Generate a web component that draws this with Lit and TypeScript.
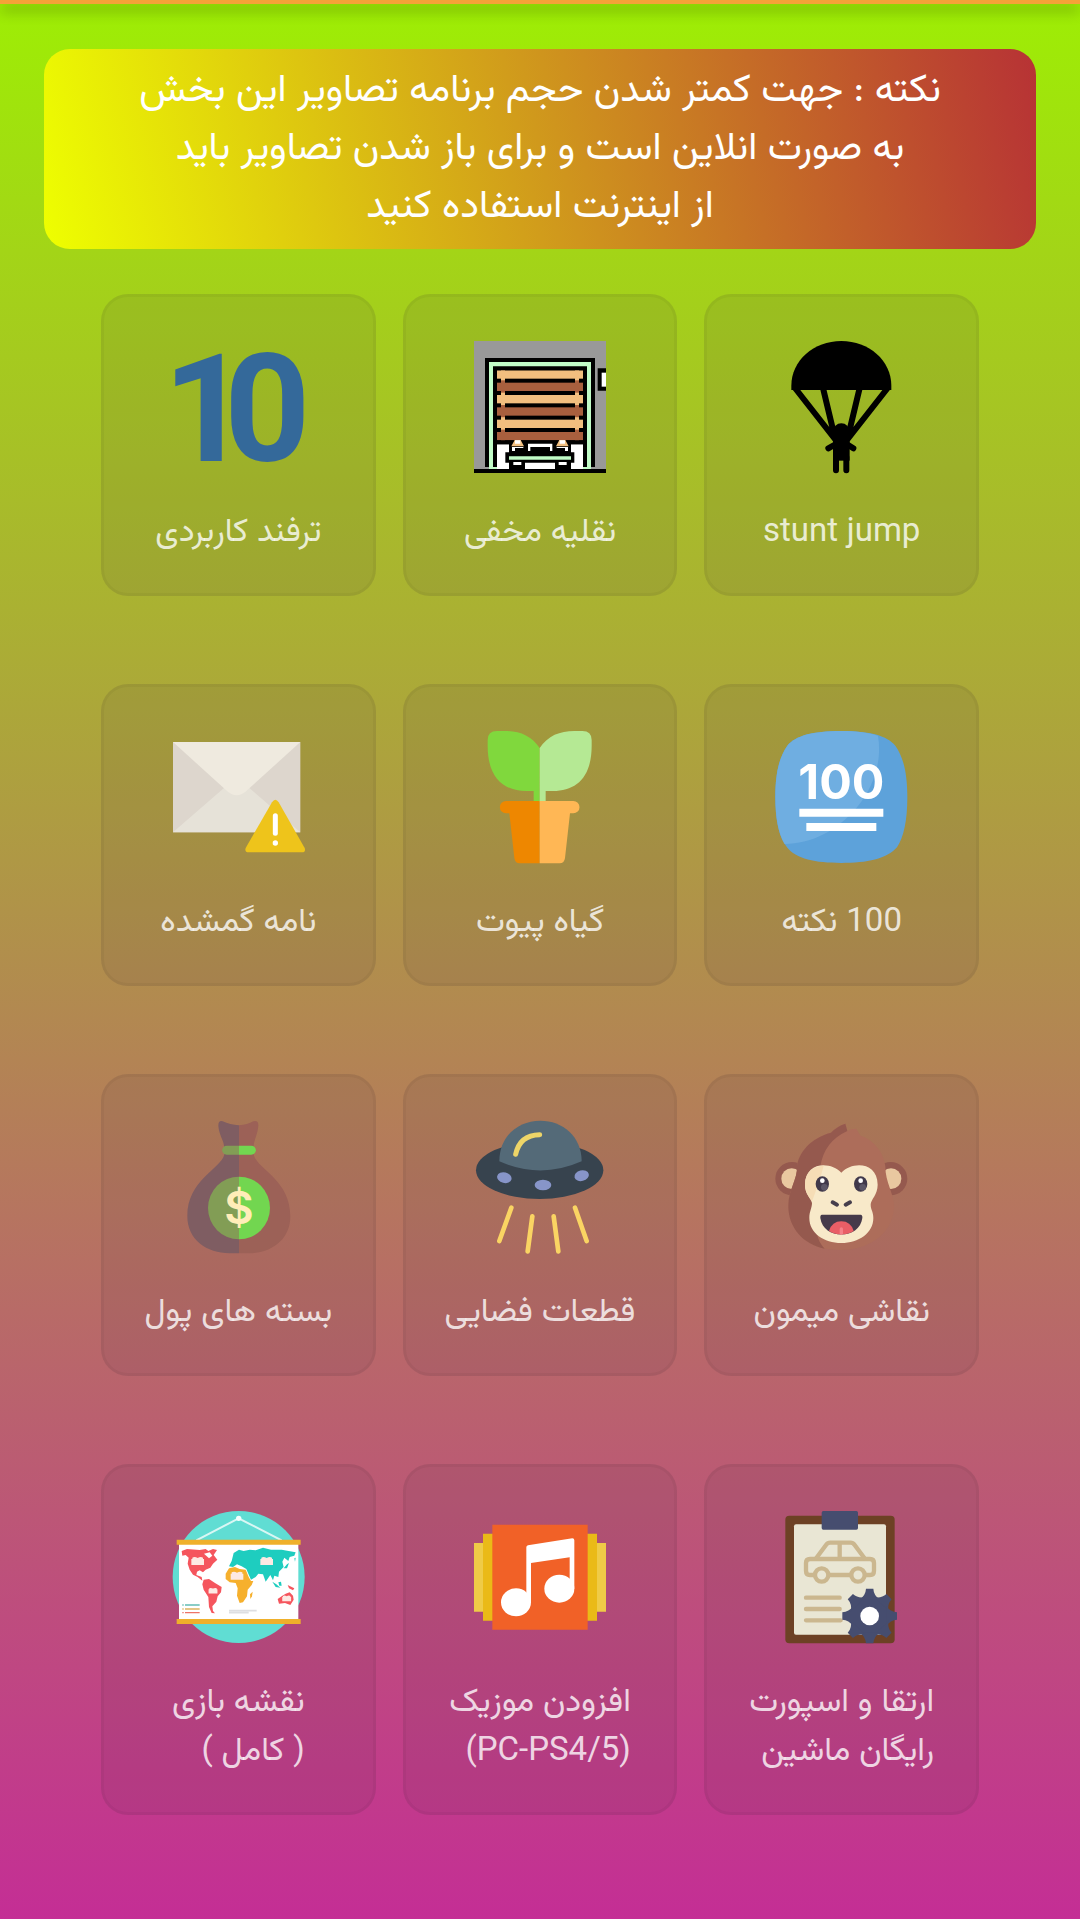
import { LitElement, html, svg, css, TemplateResult, SVGTemplateResult } from "lit";
import { customElement, property } from "lit/decorators.js";

const parachute = svg`
  <path d="M303 328V315C303 240 370 181 453 181S603 240 603 315V328Z"/>
  <path d="M314 322L436 478M398 322L431 460M508 322L475 460M592 322L470 478" stroke="#000" stroke-width="18"/>
  <circle cx="453" cy="453" r="25"/>
  <path d="M428 455H478V540H428Z"/>
  <path d="M414 503L442 487M489 503L464 487M437 530V569M468 530V569" stroke="#000" stroke-width="18" stroke-linecap="round"/>`;

const slat = (y: number, fill: string) => svg`
  <rect x="321" y=${y} width="258" height="25" fill=${fill}/>
  <rect x="333" y=${y - 7} width="12" height="38" fill=${fill}/>
  <rect x="555" y=${y - 7} width="12" height="38" fill=${fill}/>`;

const garage = svg`
  <path d="M252 182H648V566H252Z" fill="#999"/>
  <path d="M252 566H648V578H252ZM623 264H648V331H623Z"/>
  <path d="M635 277H648V319H635Z" fill="#fff"/>
  <path d="M285 233H615V560H285Z"/>
  <path d="M297 245H603V566H297Z" fill="#c1fcc7"/>
  <path d="M309 258H591V560H309Z"/>
  <path d="M321 480H579V566H321Z" fill="#fff"/>
  <path d="M321 270H579V492H321Z"/>
  <path d="M333 270H345V470H333ZM555 270H567V470H555Z" fill="#f2bf7f"/>
  ${[270, 307, 344, 381, 418, 455].map((y, i) => slat(y, i % 2 ? "#a85f3e" : "#f2bf7f"))}
  <path d="M321 262H579V270H321ZM321 480H579V492H321Z"/>
  <path d="M357 486H543V516H553V547H543V566H495V547H405V566H357V547H346V516H357Z"/>
  <path d="M364 498L374 479H392L402 498ZM498 498L508 479H526L536 498Z" fill="#f2bf7f"/>
  <path d="M375 490V480H391V490ZM509 490V480H525V490ZM366 500H400V512H366ZM414 490H487V512H414ZM500 500H534V512H500ZM370 545H394V554H370ZM506 545H530V554H506Z" fill="#fff"/>
  <path d="M421 500H480V512H421ZM375 503H410V515H375ZM492 503H525V515H492Z"/>
  <path d="M357 528H543V538H357Z" fill="#c1fcc7"/>`;

const ten = svg`
  <text x="220 404" y="540" fill="#34699a" font-family="Roboto, sans-serif" font-weight="700" font-size="450">10</text>`;

const hundred = svg`
  <path d="M453 181C540 181 590 195 615 225C640 260 651 310 651 379C651 450 640 500 620 530C590 565 530 577 453 577S316 565 290 530C266 500 255 450 255 379C255 310 266 260 291 225C316 195 366 181 453 181Z" fill="#5da2da"/>
  <path d="M453 181C500 181 537 186 563 196C574 260 558 340 500 410C440 482 360 520 283 520C264 490 255 440 255 379C255 310 266 260 291 225C316 195 366 181 453 181Z" fill="#6faee1"/>
  <text x="453" y="386" fill="#fff" text-anchor="middle" font-family="Inter, sans-serif" font-weight="700" font-size="145">100</text>
  <path d="M327 414H579V438H327ZM348 457H558V481H348Z" fill="#fff"/>`;

const plant = svg`
  <path d="M1350 232C1325 195 1290 181 1246 181H1222Q1194 181 1194 208V225C1194 320 1240 361 1310 361H1332V393H1350Z" fill="#80d83d"/>
  <path d="M1350 232C1375 195 1410 181 1454 181H1478Q1506 181 1506 208V225C1506 320 1460 361 1390 361H1368V393H1350Z" fill="#b5e994"/>
  <path d="M1350 391H1249A18 18 0 0 0 1249 428H1259L1274 562Q1276 578 1290 578H1350Z" fill="#ee8700"/>
  <path d="M1350 391H1451A18 18 0 0 1 1451 428H1441L1426 562Q1424 578 1410 578H1350Z" fill="#ffb755"/>`;

const letter = svg`
  <path d="M249 214H631V485H249Z" fill="#ddd6cd"/>
  <path d="M249 485L440 319L631 485Z" fill="#e6e2d8"/>
  <path d="M249 214H631L468 362Q440 386 412 362Z" fill="#efeadf"/>
  <path d="M546 395Q556 379 566 395L644 532Q648 545 636 545H476Q463 545 467 532Z" fill="#eec41b"/>
  <path d="M556 435V488" stroke="#fff" stroke-width="15" stroke-linecap="round"/>
  <circle cx="556" cy="517" r="8" fill="#fff"/>`;

const monkey = svg`
  <circle cx="305" cy="357" r="50" fill="#95594e"/><circle cx="601" cy="357" r="50" fill="#95594e"/>
  <circle cx="304" cy="357" r="31" fill="#e9c8a0"/><circle cx="602" cy="357" r="31" fill="#e9c8a0"/>
  <path d="M465 192Q440 200 422 219C360 235 325 280 320 320C322 360 294 390 294 440C294 500 340 555 403 567L453 571C550 570 611 510 611 440C611 400 585 370 585 320C580 275 548 240 510 228L498 207Q484 206 471 214Z" fill="#ad6d5a"/>
  <path d="M465 192Q440 200 422 219C360 235 325 280 320 320C322 360 294 390 294 440C294 505 340 555 403 567C355 520 380 400 390 320Q402 245 471 214Z" fill="#95594e"/>
  <path d="M453 339C485 305 561 305 562 375C562 405 541 420 541 435C541 450 549 455 549 475C549 520 505 550 453 550S357 520 357 475C357 455 365 445 365 430C362 415 344 405 344 375C345 305 421 305 453 339Z" fill="#f8e9c9"/>
  <path d="M400 318C365 320 344 340 344 375C344 400 358 412 365 425C375 400 392 350 400 318Z" fill="#f6ddb6"/>
  <ellipse cx="396" cy="373" rx="20" ry="23" fill="#41394b"/><ellipse cx="511" cy="373" rx="20" ry="23" fill="#41394b"/>
  <circle cx="402" cy="383" r="10" fill="#5d5767"/><circle cx="517" cy="383" r="10" fill="#5d5767"/>
  <circle cx="396" cy="363" r="7" fill="#fff"/><circle cx="511" cy="363" r="7" fill="#fff"/>
  <path d="M427 428L440 435M479 428L466 435" stroke="#463e4c" stroke-width="12" stroke-linecap="round"/>
  <path d="M395 465H511Q517 466 516 475C508 541 398 541 390 475Q389 466 395 465Z" fill="#463a4a"/>
  <path d="M416 514Q425 485 453 485T490 514Q475 524 453 524T416 514Z" fill="#e95e66"/>
  <path d="M453 508V521" stroke="#f58088" stroke-width="10" stroke-linecap="round"/>`;

const ufo = svg`
  <ellipse cx="1350" cy="332" rx="191" ry="86" fill="#37434e"/>
  <path d="M1229 305C1229 230 1285 183 1352 183S1476 230 1476 305Q1352 360 1229 305Z" fill="#546a78"/>
  <path d="M1278 284Q1290 226 1350 225" fill="none" stroke="#eed568" stroke-width="15" stroke-linecap="round"/>
  <g fill="#8795c9">
    <ellipse cx="1244" cy="354" rx="22" ry="16" transform="rotate(14 1244 354)"/>
    <ellipse cx="1360" cy="376" rx="25" ry="16"/>
    <ellipse cx="1476" cy="348" rx="22" ry="16" transform="rotate(-14 1476 348)"/>
  </g>
  <path d="M1265 444L1229 544M1328 470L1314 575M1392 470L1406 575M1456 444L1491 544" stroke="#fad463" stroke-width="14" stroke-linecap="round"/>`;

const bag = svg`
  <path d="M447 197Q420 196 398 185Q385 181 385 198C387 225 400 240 402 258L403 285C390 330 292 360 292 470C292 540 350 581 419 581H447Z" fill="#7f5d62"/>
  <path d="M447 197Q472 196 490 185Q506 181 505 198C503 225 492 240 491 258V285C503 330 601 360 601 470C601 540 545 581 475 581H447Z" fill="#9c6157"/>
  <path d="M447 258H410A13 13 0 0 0 410 285H447Z" fill="#829d55"/>
  <path d="M447 258H484A13 13 0 0 1 484 285H447Z" fill="#72d650"/>
  <path d="M447 351A93 94 0 0 0 447 539Z" fill="#829d55"/>
  <path d="M447 351A93 94 0 0 1 447 539Z" fill="#72d650"/>
  <text x="447" y="494" fill="#ffedb8" text-anchor="middle" font-family="Inter, sans-serif" font-weight="600" font-size="136">$</text>`;

const clipboard = svg`
  <rect x="106" y="78" width="328" height="383" rx="12" fill="#6d4125"/>
  <rect x="132" y="104" width="276" height="331" rx="6" fill="#e9e6d4"/>
  <rect x="215" y="64" width="109" height="56" rx="5" fill="#464d6f"/>
  <g fill="none" stroke="#cbb78f" stroke-width="13" stroke-linecap="round" stroke-linejoin="round">
    <path d="M190 256H180Q168 256 168 243V220Q168 208 180 208H360Q372 208 372 220V243Q372 256 360 256H350M241 256H299"/>
    <path d="M199 205L228 166Q233 159 241 159H301Q309 159 314 166L343 205M269 159V205"/>
    <circle cx="215" cy="256" r="20"/><circle cx="324" cy="256" r="20"/>
    <path d="M168 324H269M168 358H269M168 392H272"/>
  </g>
  <g fill="#464d6f" transform="translate(359 379)">
    <circle r="59"/>
    ${[0, 45, 90, 135, 180, 225, 270, 315].map(a => svg`<path d="M-11 -82H11Q12 -62 30 -50H-30Q-12 -62 -11 -82Z" transform="rotate(${a})"/>`)}
  </g>
  <circle cx="359" cy="379" r="28" fill="#fff"/>`;

const music = svg`
  <path d="M72 160H468V366H72Z" fill="#efcb47"/>
  <path d="M99 132H441V393H99Z" fill="#eaba17"/>
  <path d="M127 105H413V420H127Z" fill="#f16127"/>
  <path d="M229 173Q229 168 234 167L367 146Q373 146 373 152V297H359V203L243 220V338H229Z" fill="#fff"/>
  <ellipse cx="198" cy="338" rx="45" ry="42" fill="#fff"/><ellipse cx="328" cy="297" rx="45" ry="42" fill="#fff"/>`;

const book = (x: number, y: number, k: number) => svg`
  <path transform="translate(${x} ${y}) scale(${k})" d="M0 -9Q-9 -14 -16 -10V8Q-9 5 0 10Q9 5 16 8V-10Q9 -14 0 -9ZM-19 -6V12H19V-6" fill="#fde9e3"/>`;

const map = svg`
  <circle cx="267" cy="262" r="198" fill="#60ddd3"/>
  <path d="M140 152L267 86L396 152" fill="none" stroke="#d9f7f4" stroke-width="6"/>
  <circle cx="267" cy="86" r="8" fill="#f4fffd"/>
  <path d="M88 160H446V392H88Z" fill="#fff"/>
  <path d="M81 150H453V165H81ZM81 388H453V403H81Z" fill="#efb02b"/>
  <path d="M96 184L112 178L150 181L168 178L176 184L190 178L202 181L192 196L203 210L190 222L182 234L168 240L160 248L150 242L142 246L140 256L156 262L158 273L144 262L130 255L120 240L114 222L117 204L108 196L98 198Z" fill="#f5555d"/>
  <path d="M163 192L180 188L188 198L178 206Z" fill="#fff"/>
  <path d="M162 270L178 268L196 280L216 292L214 308L204 320L200 336L188 350L190 364L196 371L186 370L178 352L176 322L162 300L158 284Z" fill="#f5555d"/>
  <path d="M228 252L238 236L256 232L270 238L288 240L297 262L304 274H311L306 286L294 300L292 320L280 338L270 340L262 318L264 296L258 280L240 278L228 268Z" fill="#f6b02d"/>
  <path d="M301 314L309 306L307 320L302 328Z" fill="#f6b02d"/>
  <path d="M246 214L252 190L268 180L282 184L300 180L318 182L340 174L364 180L396 180L438 188L434 198L420 202L416 214L404 204L398 216L402 232L388 246L386 262L374 258L370 272L362 256L348 276L340 254L326 252L318 262L304 270L296 252L290 238L276 230L262 224L250 232L238 230Z" fill="#1ecdbf"/>
  <path d="M368 276L380 284L392 294L378 292ZM386 278L394 276L396 288L389 288ZM402 236L412 224L418 220L412 236ZM434 206L438 204L436 216Z" fill="#1ecdbf"/>
  <path d="M384 328L398 318L408 312L420 308L430 318L432 330L422 346L406 340L388 342ZM414 286L434 296L430 302L418 296Z" fill="#f5555d"/>
  ${book(144, 214, 1)}${book(190, 303, 0.7)}${book(262, 258, 1)}${book(351, 214, 1)}${book(411, 326, 0.7)}
  <g stroke-width="4">
    <path d="M98 346H102M106 346H150" stroke="#63bdb5"/>
    <path d="M98 358H102M106 358H150" stroke="#dcb45f"/>
    <path d="M98 369H102M106 369H150" stroke="#ee7468"/>
    <path d="M238 363H321M238 369H297" stroke="#dedfe2" stroke-width="5"/>
  </g>`;

interface Topic {
  label: TemplateResult | string;
  box: string;
  art: SVGTemplateResult;
}

const topics: Topic[] = [
  { label: "stunt jump", box: "257 181 396 396", art: parachute },
  { label: "نقلیه مخفی", box: "252 182 396 396", art: garage },
  { label: "ترفند کاربردی", box: "247 181 396 396", art: ten },
  { label: "100 نکته", box: "257 181 396 396", art: hundred },
  { label: "گیاه پیوت", box: "1153 181 396 396", art: plant },
  { label: "نامه گمشده", box: "246 181 396 396", art: letter },
  { label: "نقاشی میمون", box: "257 184 396 396", art: monkey },
  { label: "قطعات فضایی", box: "1153 184 396 396", art: ufo },
  { label: "بسته های پول", box: "246 184 396 396", art: bag },
  { label: html`ارتقا و اسپورت<br>رایگان ماشین`, box: "78 64 396 396", art: clipboard },
  { label: html`افزودن موزیک<br><bdi class="latin" dir="ltr">(PC-PS4/5)</bdi>`, box: "72 64 396 396", art: music },
  { label: html`نقشه بازی<br>( کامل )`, box: "67 64 396 396", art: map },
];

@customElement("topic-card")
class TopicCard extends LitElement {
  @property({ attribute: false }) topic!: Topic;

  static styles = css`
    :host { display: block; }
    .card {
      box-sizing: border-box;
      display: flex;
      flex-direction: column;
      align-items: center;
      gap: 36px;
      width: 100%;
      height: 100%;
      margin: 0;
      padding: 44px 0 35px;
      border: 3px solid rgba(0, 0, 0, 0.04);
      border-radius: 27px;
      background: rgba(70, 50, 70, 0.1);
      color: rgba(255, 255, 255, 0.8);
      font: inherit;
      text-align: start;
      cursor: pointer;
    }
    .icon { display: block; width: 132px; height: 132px; direction: ltr; overflow: visible; }
    .label { line-height: 49px; white-space: nowrap; }
    .latin { font-family: Roboto, sans-serif; line-height: 1; }
  `;

  render() {
    return html`
      <button class="card" type="button">
        <svg class="icon" viewBox=${this.topic.box} aria-hidden="true">${this.topic.art}</svg>
        <span class="label">${this.topic.label}</span>
      </button>`;
  }
}

@customElement("app-root")
class AppRoot extends LitElement {
  static styles = css`
    :host {
      box-sizing: border-box;
      display: block;
      min-height: 100vh;
      background: linear-gradient(#9eee04, #c42e95);
      font: 33px Vazirmatn, Roboto, "Noto Sans", sans-serif;
    }
    .bar {
      height: 4px;
      background: #f5a238;
      box-shadow: 0 6px 14px rgba(0, 0, 0, 0.45);
    }
    .page { padding: 45px 44px 102px; }
    .note {
      margin: 0 0 45px;
      padding: 14px 0 12px;
      border-radius: 26px;
      background: linear-gradient(78deg, #eeff00, #d0991c 50%, #b73235);
      color: #fff;
      font-size: 39px;
      line-height: 58px;
      text-align: center;
    }
    .grid {
      display: grid;
      grid-template-columns: repeat(3, 1fr);
      gap: 88px 27px;
      padding: 0 57px;
    }
  `;

  render() {
    return html`
      <header class="bar"></header>
      <main class="page" dir="rtl" lang="fa">
        <p class="note">
          نکته : جهت کمتر شدن حجم برنامه تصاویر این بخش<br>
          به صورت انلاین است و برای باز شدن تصاویر باید<br>
          از اینترنت استفاده کنید
        </p>
        <div class="grid">
          ${topics.map(t => html`<topic-card .topic=${t}></topic-card>`)}
        </div>
      </main>`;
  }
}
